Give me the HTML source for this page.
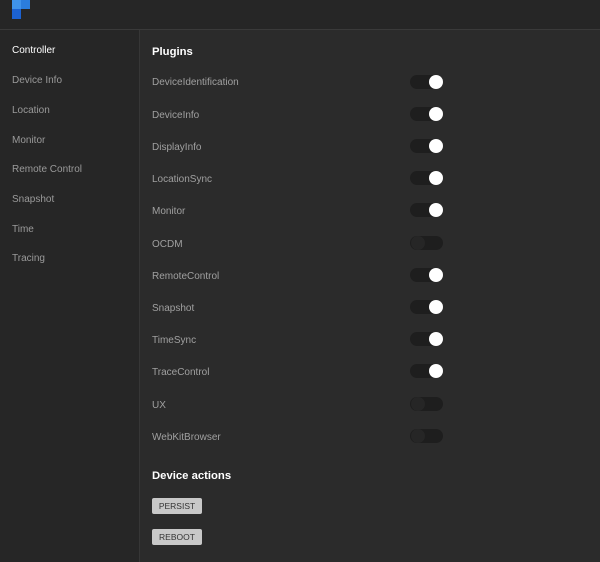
<!DOCTYPE html>
<html><head><style>
body{margin:0;width:600px;height:562px;background:#2a2a2a;font-family:"Liberation Sans",sans-serif;overflow:hidden;position:relative}
.hdr{position:absolute;left:0;top:0;width:600px;height:29px;background:#262626;border-bottom:1px solid #3a3a3a}
.side{position:absolute;left:0;top:30px;width:139px;height:532px;background:#262626;border-right:1px solid #363636}
.nav{position:absolute;left:12px;font-size:10px;color:#9a9a9a;margin-top:2px}
.main{position:absolute;left:140px;top:30px;right:0;bottom:0;background:#2b2b2b}
h3{position:absolute;left:152px;margin:0;font-size:11.3px;color:#fff;font-weight:bold;margin-top:2px}
.lbl{position:absolute;left:152px;font-size:10px;color:#a0a0a0;margin-top:2px}
.tg{position:absolute;left:410px;width:33px;height:14px;border-radius:7px;background:#1e1e1e}
.tg i{position:absolute;top:0;width:14px;height:14px;border-radius:7px}
.on i{left:19px;background:#fff}
.off i{left:1px;background:#262626}
.btn{position:absolute;left:152px;width:50px;height:16px;background:#c8c8c8;border-radius:2px;font-size:8.5px;color:#333;text-align:center;line-height:16px}
</style></head><body>
<div class="hdr">
<div style="position:absolute;left:12px;top:0;width:9px;height:9px;background:#3f93ea"></div>
<div style="position:absolute;left:21px;top:0;width:9px;height:9px;background:#2b7ddc"></div>
<div style="position:absolute;left:12px;top:9px;width:9px;height:10px;background:#1c62d2"></div>
</div>
<div class="side"></div>
<div class="main"></div>
<div class="nav" style="top:43px;color:#fff">Controller</div>
<div class="nav" style="top:73px">Device Info</div>
<div class="nav" style="top:103px">Location</div>
<div class="nav" style="top:133px">Monitor</div>
<div class="nav" style="top:162px">Remote Control</div>
<div class="nav" style="top:192px">Snapshot</div>
<div class="nav" style="top:222px">Time</div>
<div class="nav" style="top:251px">Tracing</div>
<h3 style="top:44px">Plugins</h3>
<div class="lbl" style="top:75px">DeviceIdentification</div><div class="tg on" style="top:75px"><i></i></div>
<div class="lbl" style="top:108px">DeviceInfo</div><div class="tg on" style="top:107px"><i></i></div>
<div class="lbl" style="top:140px">DisplayInfo</div><div class="tg on" style="top:139px"><i></i></div>
<div class="lbl" style="top:172px">LocationSync</div><div class="tg on" style="top:171px"><i></i></div>
<div class="lbl" style="top:204px">Monitor</div><div class="tg on" style="top:203px"><i></i></div>
<div class="lbl" style="top:237px">OCDM</div><div class="tg off" style="top:236px"><i></i></div>
<div class="lbl" style="top:269px">RemoteControl</div><div class="tg on" style="top:268px"><i></i></div>
<div class="lbl" style="top:301px">Snapshot</div><div class="tg on" style="top:300px"><i></i></div>
<div class="lbl" style="top:333px">TimeSync</div><div class="tg on" style="top:332px"><i></i></div>
<div class="lbl" style="top:365px">TraceControl</div><div class="tg on" style="top:364px"><i></i></div>
<div class="lbl" style="top:398px">UX</div><div class="tg off" style="top:397px"><i></i></div>
<div class="lbl" style="top:430px">WebKitBrowser</div><div class="tg off" style="top:429px"><i></i></div>
<h3 style="top:468px">Device actions</h3>
<div class="btn" style="top:498px">PERSIST</div>
<div class="btn" style="top:529px">REBOOT</div>
</body></html>
